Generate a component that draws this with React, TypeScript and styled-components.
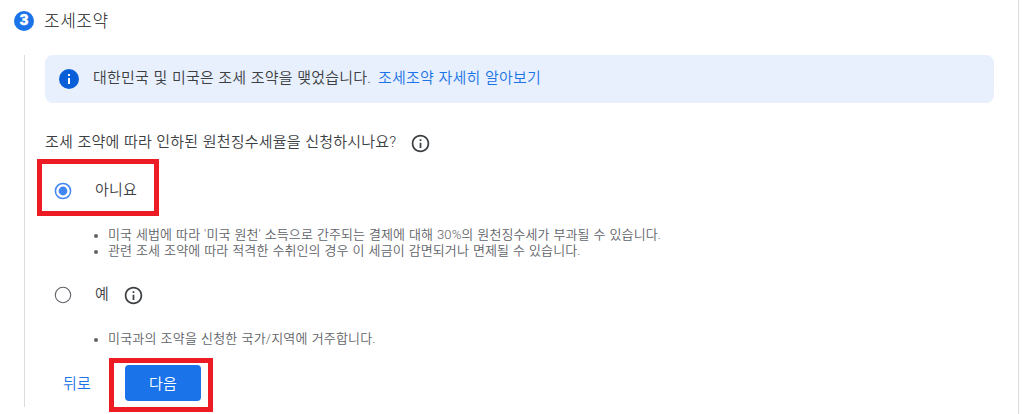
import React, { useState } from "react"
import styled, { createGlobalStyle } from "styled-components"

const GlobalStyle = createGlobalStyle`
  body {
    margin: 0;
    background: #fff;
    font-family: Roboto, "Noto Sans CJK KR", sans-serif;
    color: #3c4043;
  }
`

const Card = styled.section`
  box-sizing: border-box;
  width: 1019px;
  height: 414px;
  border-right: 1px solid #dadce0;
  overflow: hidden;
`

const StepHeader = styled.header`
  display: flex;
  align-items: center;
  height: 42px;
  padding-left: 14px;
  margin-bottom: 13px;
`

const StepNumber = styled.span`
  width: 20px;
  height: 20px;
  border-radius: 50%;
  background: #1a73e8;
  color: #fff;
  font-size: 15px;
  font-weight: 900;
  line-height: 19px;
  text-align: center;
  -webkit-text-stroke: 0.5px #fff;
`

const StepTitle = styled.h2`
  margin: 0 0 0 10px;
  font-size: 17px;
  font-weight: 300;
  line-height: 24px;
  letter-spacing: 0.5px;
  color: #202124;
`

const StepBody = styled.div`
  box-sizing: border-box;
  height: 352px;
  margin-left: 24px;
  padding-left: 20px;
  border-left: 1px solid #dadce0;
`

const Banner = styled.div`
  display: flex;
  align-items: center;
  box-sizing: border-box;
  width: 949px;
  height: 48px;
  padding-left: 14px;
  border-radius: 8px;
  background: #e8f0fe;
`

const Label = styled.span`
  font-size: 15px;
  font-weight: 350;
  line-height: 20px;
  letter-spacing: 0.2px;
  word-spacing: 0.6px;
  white-space: nowrap;
`

const BannerText = styled(Label)`
  margin: 0 0 2px 14px;
`

const BannerLink = styled.a`
  margin-left: 7px;
  color: #1a73e8;
  text-decoration: none;
`

const Question = styled.div`
  display: flex;
  align-items: center;
  height: 20px;
  margin-top: 30px;

  svg {
    margin-left: 14px;
  }
`

const QuestionText = styled(Label)`
  margin-bottom: 2px;
`

const Option = styled.label<{ $top: number }>`
  position: relative;
  display: flex;
  align-items: center;
  height: 20px;
  margin-top: ${({ $top }) => $top}px;
  padding-left: 8px;
`

const OptionText = styled(Label)`
  margin: 0 14px 2px 22px;
`

const HiddenRadio = styled.input`
  position: absolute;
  opacity: 0;
  pointer-events: none;
`

const Notes = styled.ul<{ $top: number }>`
  margin: ${({ $top }) => $top}px 0 0;
  padding: 0 0 0 49px;
  list-style: none;
`

const Note = styled.li<{ $spacing?: number }>`
  display: flex;
  align-items: center;
  height: 16px;
  color: #5f6368;
  font-size: 13px;
  font-weight: 350;
  line-height: 16px;
  letter-spacing: ${({ $spacing = 0.09 }) => $spacing}px;
  word-spacing: 0.7px;
  white-space: nowrap;

  &::before {
    content: "";
    width: 4px;
    height: 4px;
    margin: 1px 10px 0 0;
    border-radius: 50%;
    background: #5f6368;
  }
`

const Actions = styled.div`
  display: flex;
  height: 36px;
  margin-top: 18px;
  padding-left: 10px;
`

const TextButton = styled.button`
  width: 44px;
  padding: 0 0 1px 8px;
  border: 0;
  background: none;
  color: #1a73e8;
  font: inherit;
  font-size: 15px;
  font-weight: 350;
  letter-spacing: 0.2px;
  text-align: left;
  white-space: nowrap;
`

const ButtonSlot = styled.div`
  position: relative;
  margin-left: 26px;
`

const PrimaryButton = styled.button`
  width: 76px;
  height: 36px;
  padding: 0 0 1px;
  border: 0;
  border-radius: 4px;
  background: #1a73e8;
  color: #fff;
  font: inherit;
  font-size: 15px;
  font-weight: 350;
  letter-spacing: 0.2px;
`

const Highlight = styled.div<{ $x: number; $y: number; $w: number; $h: number }>`
  position: absolute;
  left: ${({ $x }) => $x}px;
  top: ${({ $y }) => $y}px;
  box-sizing: border-box;
  width: ${({ $w }) => $w}px;
  height: ${({ $h }) => $h}px;
  border: 5px solid #ed1c24;
  pointer-events: none;
`

const InfoFilled = () => (
  <svg width="20" height="20" viewBox="0 0 20 20">
    <circle cx="10" cy="10" r="10" fill="#085fd8" />
    <path d="M9 5h2v2H9zM9 9h2v6H9z" fill="#fff" />
  </svg>
)

const InfoOutlined = () => (
  <svg width="21" height="21" viewBox="0 0 24 24" fill="#3c4043">
    <path d="M11 7h2v2h-2zm0 4h2v6h-2zm1-9C6.48 2 2 6.48 2 12s4.48 10 10 10 10-4.48 10-10S17.52 2 12 2zm0 18c-4.41 0-8-3.59-8-8s3.59-8 8-8 8 3.59 8 8-3.59 8-8 8z" />
  </svg>
)

const RadioMark = ({ checked }: { checked: boolean }) => (
  <svg width="20" height="20" viewBox="0 0 20 20">
    <circle
      cx="10"
      cy="10"
      r={checked ? 7.6 : 7.7}
      fill="none"
      stroke={checked ? "#4285f4" : "#5f6368"}
      strokeWidth={checked ? 1.5 : 1.1}
    />
    {checked && <circle cx="10" cy="10" r="4.4" fill="#4285f4" />}
  </svg>
)

const App = () => {
  const [treaty, setTreaty] = useState("no")

  return (
    <>
      <GlobalStyle />
      <Card>
        <StepHeader>
          <StepNumber>3</StepNumber>
          <StepTitle>조세조약</StepTitle>
        </StepHeader>
        <StepBody>
          <Banner>
            <InfoFilled />
            <BannerText>
              대한민국 및 미국은 조세 조약을 맺었습니다.
              <BannerLink href="#">조세조약 자세히 알아보기</BannerLink>
            </BannerText>
          </Banner>
          <Question>
            <QuestionText>
              조세 조약에 따라 인하된 원천징수세율을 신청하시나요?
            </QuestionText>
            <InfoOutlined />
          </Question>
          <Option $top={28}>
            <HiddenRadio
              type="radio"
              name="treaty"
              checked={treaty === "no"}
              onChange={() => setTreaty("no")}
            />
            <RadioMark checked={treaty === "no"} />
            <OptionText>아니요</OptionText>
            <Highlight $x={-8} $y={-22} $w={122} $h={57} />
          </Option>
          <Notes $top={26}>
            <Note $spacing={0.08}>
              미국 세법에 따라 '미국 원천' 소득으로 간주되는 결제에 대해 30%의
              원천징수세가 부과될 수 있습니다.
            </Note>
            <Note>
              관련 조세 조약에 따라 적격한 수취인의 경우 이 세금이 감면되거나
              면제될 수 있습니다.
            </Note>
          </Notes>
          <Option $top={26}>
            <HiddenRadio
              type="radio"
              name="treaty"
              checked={treaty === "yes"}
              onChange={() => setTreaty("yes")}
            />
            <RadioMark checked={treaty === "yes"} />
            <OptionText>예</OptionText>
            <InfoOutlined />
          </Option>
          <Notes $top={26}>
            <Note $spacing={0.18}>
              미국과의 조약을 신청한 국가/지역에 거주합니다.
            </Note>
          </Notes>
          <Actions>
            <TextButton>뒤로</TextButton>
            <ButtonSlot>
              <PrimaryButton>다음</PrimaryButton>
              <Highlight $x={-16} $y={-7} $w={104} $h={54} />
            </ButtonSlot>
          </Actions>
        </StepBody>
      </Card>
    </>
  )
}

export default App
